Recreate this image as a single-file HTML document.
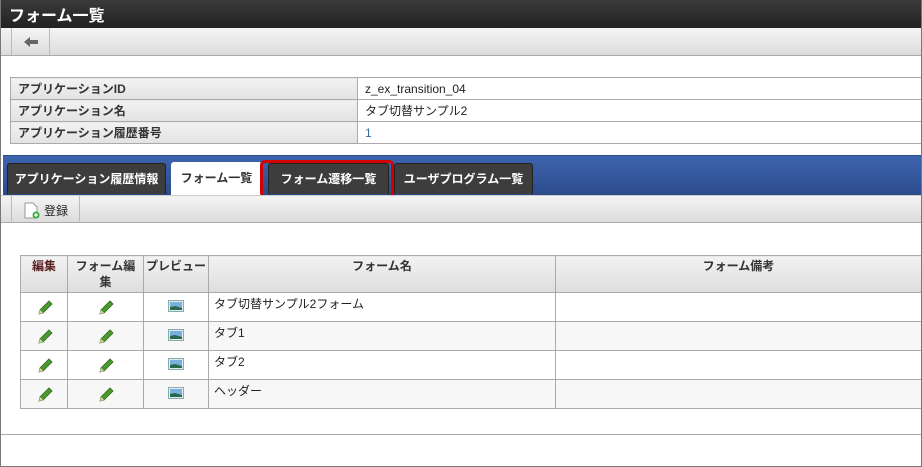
<!DOCTYPE html>
<html><head><meta charset="utf-8"><style>
*{margin:0;padding:0;box-sizing:border-box}
body{width:922px;height:467px;overflow:hidden;background:#fff;font-family:"Liberation Sans","Noto Sans CJK JP",sans-serif;font-size:12px;color:#222;position:relative}
.frame{position:absolute;left:0;top:0;width:922px;height:467px;border:1px solid #777;border-top:none}
.title{position:absolute;left:0;top:0;width:922px;height:28px;background:linear-gradient(#3a3a3a,#222);color:#fff;font-size:16px;font-weight:bold;padding:2px 0 0 9px}
.tb{position:absolute;left:1px;width:920px;background:linear-gradient(#f4f4f4,#dcdcdc);border-bottom:1px solid #aaa}
.abs{position:absolute}
table{border-collapse:collapse;position:absolute}
td,th{border:1px solid #aaa}
.info td{height:22px;padding:0 7px;font-size:12px}
.info td.l{background:linear-gradient(#f2f2f2,#e2e2e2);font-weight:bold;color:#333;width:347px}
.tab{position:absolute;top:163px;height:31px;background:#3d3d3d;border:1px solid #222;border-bottom:none;border-radius:3px 3px 0 0;color:#fff;font-weight:bold;font-size:12px;text-align:center;line-height:30px}
.grid th{background:linear-gradient(#f2f2f2,#dedede);font-size:12px;font-weight:bold;color:#333;vertical-align:top;padding-top:2px;height:37px;line-height:16px}
.grid td{height:29px;vertical-align:top;padding-top:2px}
.grid tr:nth-child(odd) td{background:#f7f7f7}
.c{text-align:center}
</style></head><body>
<div class="title">フォーム一覧</div>
<div class="tb" style="top:28px;height:28px"><div class="abs" style="left:10px;top:0;width:39px;height:27px;border-left:1px solid #bbb;border-right:1px solid #bbb"><svg width="39" height="27"><path d="M12 14 L18 9 V12 H26 V16 H18 V19 Z" fill="#666"/></svg></div></div>
<table class="info" style="left:10px;top:77px;width:912px">
<tr><td class="l">アプリケーションID</td><td>z_ex_transition_04</td></tr>
<tr><td class="l">アプリケーション名</td><td>タブ切替サンプル2</td></tr>
<tr><td class="l">アプリケーション履歴番号</td><td style="color:#3a6aa8">1</td></tr>
</table>
<div class="abs" style="left:3px;top:155px;width:919px;height:40px;background:linear-gradient(#3d64ae,#2c4b8c);border-top:1px solid #2a4a8a"></div>
<div class="tab" style="left:7px;width:159px">アプリケーション履歴情報</div>
<div class="tab" style="left:171px;width:91px;background:#fff;color:#333;border-color:#fff;top:162px;height:33px">フォーム一覧</div>
<div class="tab" style="left:268px;width:121px">フォーム遷移一覧</div>
<div class="tab" style="left:394px;width:139px">ユーザプログラム一覧</div>
<div class="abs" style="left:260px;top:160px;width:134px;height:38px;border:3px solid #d40000;border-radius:5px"></div>
<div class="tb" style="top:195px;height:28px;border-top:1px solid #ccc"><div class="abs" style="left:10px;top:0;width:69px;height:27px;border-left:1px solid #bbb;border-right:1px solid #bbb">
<svg class="abs" style="left:12px;top:6px" width="16" height="17"><path d="M1 1 H9 L13 5 V16 H1 Z" fill="#fff" stroke="#999"/><circle cx="12" cy="13" r="3.5" fill="#3a3"/><path d="M12 11 V15 M10 13 H14" stroke="#fff" stroke-width="1.3"/></svg>
<span class="abs" style="left:32px;top:6px;font-size:12px">登録</span></div></div>
<table class="grid" style="left:20px;top:255px;width:902px">
<tr><th style="width:47px;color:#5a2020">編集</th><th style="width:76px">フォーム編<br>集</th><th style="width:65px">プレビュー</th><th style="width:347px">フォーム名</th><th>フォーム備考</th></tr>
<tr><td class="c">P</td><td class="c">P</td><td class="c">I</td><td style="padding-left:5px">タブ切替サンプル2フォーム</td><td></td></tr>
<tr><td class="c">P</td><td class="c">P</td><td class="c">I</td><td style="padding-left:5px">タブ1</td><td></td></tr>
<tr><td class="c">P</td><td class="c">P</td><td class="c">I</td><td style="padding-left:5px">タブ2</td><td></td></tr>
<tr><td class="c">P</td><td class="c">P</td><td class="c">I</td><td style="padding-left:5px">ヘッダー</td><td></td></tr>
</table>
<div class="abs" style="left:1px;top:434px;width:921px;border-top:1px solid #aaa"></div>
<div class="frame"></div>
<script>
document.querySelectorAll('.grid td.c').forEach(function(t){
if(t.textContent=='P')t.innerHTML='<svg width="17" height="17" style="margin-top:4px"><path d="M3 15 L4 11 L13 2 L16 5 L7 14 Z" fill="#4a9a30" stroke="#2d6a1a" stroke-width=".8"/><path d="M3 15 L4 11 L7 14 Z" fill="#e8d4a8"/></svg>';
else t.innerHTML='<svg width="16" height="12" style="margin-top:5px"><rect x=".5" y=".5" width="15" height="11" fill="#dfeaf4" stroke="#8aa"/><rect x="2" y="2" width="12" height="8" fill="#7ab0dd"/><path d="M2 7 L7 6 L14 8 V10 H2Z" fill="#2a6a4a"/></svg>';});
</script>
</body></html>
